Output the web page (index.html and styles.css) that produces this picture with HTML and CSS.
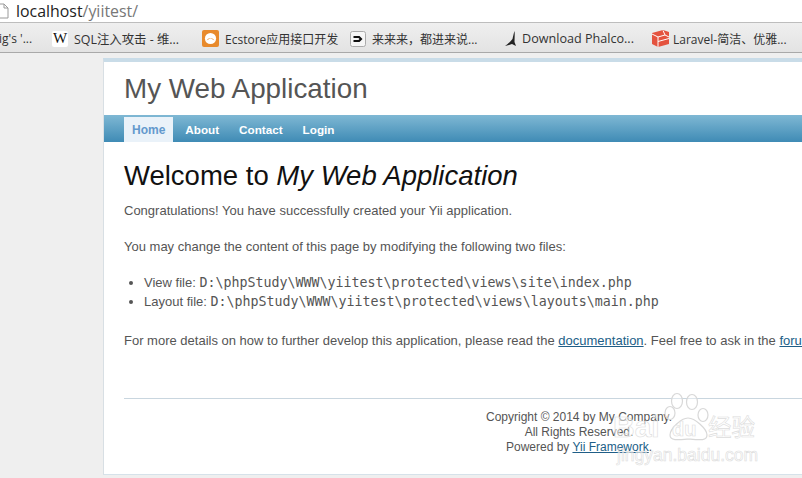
FILE: index.html
```html
<!DOCTYPE html>
<html lang="zh">
<head>
<meta charset="utf-8">
<title>My Web Application</title>
<link rel="stylesheet" href="styles.css">
</head>
<body>
<div class="address">
  <svg class="page-icon" width="9" height="16" viewBox="0 0 9 16"><path d="M-4 1H4L8 5V15H-4Z" fill="#fff" stroke="#9a9a9a"/><path d="M4 1V5H8" fill="none" stroke="#9a9a9a"/></svg>
  <span class="host">localhost</span><span class="path">/yiitest/</span>
</div>
<div class="bookmarks">
  <div class="bm bm-first"><span>ig's '...</span></div>
  <div class="bm bm-w"><span class="wiki">W</span><span>SQL注入攻击 - 维...</span></div>
  <div class="bm bm-e"><svg width="17" height="17" viewBox="0 0 17 17"><rect width="17" height="17" rx="2" fill="#e88a2c"/><circle cx="8.5" cy="8.5" r="5.6" fill="#fff"/><path d="M4.5 10.5A4.4 4.4 0 0 1 12.5 10.5L8.5 8.2Z" fill="#e88a2c"/></svg><span>Ecstore应用接口开发</span></div>
  <div class="bm bm-l"><svg width="16" height="16" viewBox="0 0 16 16"><rect x=".5" y=".5" width="15" height="15" rx="2" fill="#f6f6f6" stroke="#aaa"/><path d="M3.5 5H9.5L12.5 8L9.5 11H3.5V9H8.5L9.5 8L8.5 7H3.5Z" fill="#111"/></svg><span>来来来，都进来说...</span></div>
  <div class="bm bm-p"><svg width="13" height="16" viewBox="0 0 13 16"><path d="M9.500 0C8.500 3 8 6 7.500 8C6 10 3 13 0 15L4 14L7 13L11 15L9.500 11C9.500 7 10 3 9.500 0Z" fill="#222"/></svg><span>Download Phalco...</span></div>
  <div class="bm bm-r"><svg width="17" height="17" viewBox="0 0 17 17"><path d="M0 3L11 0L17 2V14L6 17L0 14Z" fill="#e4533f"/><path d="M0 4L6 7V17M6 7L13 5L17 7M6 11.500L17 8.500M11 0.500L13 5" fill="none" stroke="#fff" stroke-width="1"/></svg><span>Laravel-简洁、优雅...</span></div>
</div>
<div class="viewport">
  <div class="page">
    <header class="logo">My Web Application</header>
    <nav class="menu">
      <a class="item active">Home</a>
      <a class="item">About</a>
      <a class="item">Contact</a>
      <a class="item">Login</a>
    </nav>
    <main class="content">
      <h1>Welcome to <i>My Web Application</i></h1>
      <p>Congratulations! You have successfully created your Yii application.</p>
      <p>You may change the content of this page by modifying the following two files:</p>
      <ul>
        <li>View file: <code>D:\phpStudy\WWW\yiitest\protected\views\site\index.php</code></li>
        <li>Layout file: <code>D:\phpStudy\WWW\yiitest\protected\views\layouts\main.php</code></li>
      </ul>
      <p class="nowrap">For more details on how to further develop this application, please read the <a class="link">documentation</a>. Feel free to ask in the <a class="link">forum</a>, should you have any questions.</p>
    </main>
    <footer class="footer">
      <div class="foot-text">Copyright © 2014 by My Company.<br>All Rights Reserved.<br>Powered by <a class="link">Yii Framework</a>.</div>
    </footer>
  </div>
</div>
<div class="watermark">
  <svg class="wm-paw" width="50" height="56" viewBox="0 0 50 56">
    <g fill="rgba(255,255,255,.4)" stroke="#d8d8d8" stroke-width="1.200">
      <ellipse cx="13" cy="9" rx="5.500" ry="7.500"/><ellipse cx="28" cy="10" rx="5.500" ry="7.500"/><ellipse cx="6" cy="21" rx="5" ry="6.500"/><ellipse cx="39" cy="23" rx="5" ry="6.500"/>
      <path d="M24 26C31 26 43 37 43 43C43 49 36 48 24 47C14 48 6 49 6 43C6 37 17 26 24 26Z"/>
    </g>
  </svg>
  <span class="wm-bai">Bai</span>
  <span class="wm-du">du</span>
  <span class="wm-jy">经验</span>
  <span class="wm-url">jingyan.baidu.com</span>
</div>
</body>
</html>
```

FILE: styles.css
```css
* { box-sizing: border-box; }
html, body { margin: 0; height: 100%; overflow: hidden; }
body { width: 802px; height: 478px; background: #efefef; font-family: "Liberation Sans", Arial, sans-serif; position: relative; }

.address { height: 23px; background: #fff; border-bottom: 1px solid #bdbdbd; display: flex; align-items: center; font-family: "Open Sans", "Noto Sans", sans-serif; font-size: 15.9px; white-space: nowrap; }
.page-icon { margin-right: 7px; flex: none; }
.host { color: #222; }
.path { color: #777; }

.bookmarks { height: 30px; padding-top: 2px; background: linear-gradient(#efefef, #e3e3e3); border-bottom: 1px solid #a9a9a9; display: flex; align-items: center; font-family: "Open Sans", "Noto Sans CJK SC", sans-serif; font-size: 12px; color: #333; white-space: nowrap; overflow: hidden; }
.bm { display: flex; align-items: center; gap: 6px; flex: none; }
.bm-first { width: 53px; margin-left: -1px; }
.wiki { width: 16px; height: 16px; background: #fff; color: #111; font: 400 15px "Liberation Serif", serif; display: flex; align-items: center; justify-content: center; border-radius: 2px; }
.bm-w { width: 150px; font-size: 12.4px; }
.bm-e { width: 148px; }
.bm-l { width: 155px; }
.bm-p { width: 147px; font-size: 12.6px; gap: 4px; }
.bm-r { gap: 4px; }

.viewport { height: 425px; overflow: hidden; padding: 5px 0 0 103px; }
.page { width: 900px; height: 417px; background: #fff; border: 1px solid #c9e0ed; border-top-width: 4px; border-right: 0; border-color: #c9dce8 #c9dce8 #d6e2ea #d8dfe4; color: #555; font-size: 13px; overflow: hidden; }

.logo { height: 50px; padding: 10px 0 0 20px; font-size: 27.8px; line-height: 34px; color: #555; }
.menu { height: 27px; margin-top: 3px; background: linear-gradient(#7fb8d4, #3f8bb5); display: flex; padding: 2px 0 0 20px; }
.item { color: #fff; font-weight: 700; font-size: 11.7px; padding: 0 10px; line-height: 26px; height: 25px; }
.item.active { background: #eaf2f9; color: #6399cd; font-size: 12px; padding: 0 8px; margin-right: 2px; }

.content { padding: 0 20px; }
h1 { margin: 17px 0 0; font-size: 27.5px; font-weight: 400; line-height: 34px; color: #111; }
h1 i { font-style: italic; }
p { margin: 0; line-height: 16px; }
h1 + p { margin-top: 10px; }
p + p { margin-top: 20px; }
ul { margin: 18px 0 0; padding-left: 20px; }
li { line-height: 19px; }
code { font-family: "DejaVu Sans Mono", monospace; font-size: 13.3px; line-height: 1; color: #555; }
ul + p { margin-top: 22px; }
.nowrap { white-space: nowrap; }
.link { color: #205e87; text-decoration: underline; }

.footer { margin: 49px 0 0 20px; width: 678px; border-top: 1px solid #c9d6df; padding-top: 11px; font-size: 12px; }
.foot-text { margin-left: 360px; width: 190px; text-align: center; line-height: 15px; }

.watermark { position: absolute; left: 612px; top: 392px; width: 150px; height: 70px; }
.watermark span { position: absolute; white-space: nowrap; color: rgba(255,255,255,.5); -webkit-text-stroke: .6px #dcdcdc; }
.wm-paw { position: absolute; left: 52px; top: 0; }
.wm-bai { left: 1px; top: 18px; font: 700 30px "Liberation Sans", sans-serif; }
.wm-du { left: 60px; top: 26px; font: 700 20px "Liberation Sans", sans-serif; }
.wm-jy { left: 96px; top: 17px; font: 400 23.5px "Noto Sans CJK SC", sans-serif; }
.wm-url { left: 5px; top: 53px; font: 400 17.5px "Liberation Sans", sans-serif; }
```
